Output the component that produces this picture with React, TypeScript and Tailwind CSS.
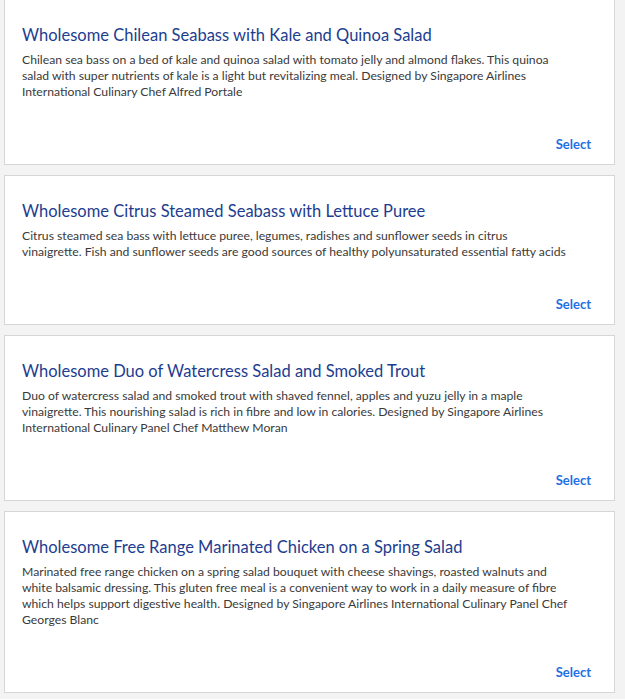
import React from "react";

const meals = [
  {
    title: "Wholesome Chilean Seabass with Kale and Quinoa Salad",
    lines: [
      "Chilean sea bass on a bed of kale and quinoa salad with tomato jelly and almond flakes. This quinoa",
      "salad with super nutrients of kale is a light but revitalizing meal. Designed by Singapore Airlines",
      "International Culinary Chef Alfred Portale",
    ],
  },
  {
    title: "Wholesome Citrus Steamed Seabass with Lettuce Puree",
    lines: [
      "Citrus steamed sea bass with lettuce puree, legumes, radishes and sunflower seeds in citrus",
      "vinaigrette. Fish and sunflower seeds are good sources of healthy polyunsaturated essential fatty acids",
    ],
  },
  {
    title: "Wholesome Duo of Watercress Salad and Smoked Trout",
    lines: [
      "Duo of watercress salad and smoked trout with shaved fennel, apples and yuzu jelly in a maple",
      "vinaigrette. This nourishing salad is rich in fibre and low in calories. Designed by Singapore Airlines",
      "International Culinary Panel Chef Matthew Moran",
    ],
  },
  {
    title: "Wholesome Free Range Marinated Chicken on a Spring Salad",
    lines: [
      "Marinated free range chicken on a spring salad bouquet with cheese shavings, roasted walnuts and",
      "white balsamic dressing. This gluten free meal is a convenient way to work in a daily measure of fibre",
      "which helps support digestive health. Designed by Singapore Airlines International Culinary Panel Chef",
      "Georges Blanc",
    ],
  },
];

export default function App() {
  return (
    <div
      className="min-h-[700px] bg-[#f3f3f3] pl-[4px] pr-[10px] flex flex-col gap-[10px] -mt-px"
      style={{ fontFamily: "Lato, 'Open Sans', Arial, sans-serif" }}
    >
      {meals.map((m) => (
        <div
          key={m.title}
          className="bg-white border border-[#d6d6d6] pl-[17px] pr-[23px] pt-[26px] pb-[12px] flex flex-col"
        >
          <h2 className="text-[16.5px] leading-[18px] text-[#1d3d8f] font-normal whitespace-nowrap">
            {m.title}
          </h2>
          <div className="mt-[8px] text-[12.2px] leading-[16px] text-[#3a3a3a]">
            {m.lines.map((l) => (
              <div key={l} className="whitespace-nowrap">
                {l}
              </div>
            ))}
          </div>
          <div className="mt-[36px] flex justify-end">
            <span className="text-[13px] leading-[16px] font-bold text-[#1f6fe5]">Select</span>
          </div>
        </div>
      ))}
    </div>
  );
}
